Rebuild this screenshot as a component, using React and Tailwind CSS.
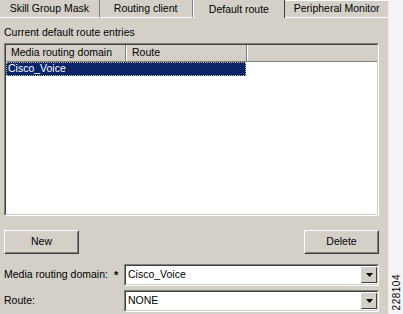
import React from "react";

const font = { fontFamily: '"Liberation Sans", Arial, sans-serif' };

function Tab({ label, width, selected, last }) {
    if (selected) {
        return (
            <div
                className={`${width} h-[18px] flex items-center justify-center border-l border-white border-r border-r-[#404040] bg-[#d4d0c8] pt-[1px]`}
            >
                {label}
            </div>
        );
    }
    return (
        <div
            className={`${width} h-[18px] flex items-center justify-center bg-[#d4d0c8] border-b border-white ${last ? "border-t border-white" : "border-r border-r-[#808080]"}`}
        >
            {label}
        </div>
    );
}

function Button({ children }) {
    return (
        <div className="w-[75px] h-[24px] border border-t-white border-l-white border-r-[#404040] border-b-[#404040]">
            <div className="w-full h-full flex items-center justify-center border border-t-[#d4d0c8] border-l-[#d4d0c8] border-r-[#808080] border-b-[#808080]">
                {children}
            </div>
        </div>
    );
}

function Combo({ value }) {
    return (
        <div className="w-[255px] h-[22px] border border-t-[#808080] border-l-[#808080] border-r-white border-b-white">
            <div className="w-full h-full flex items-center bg-white border border-t-[#404040] border-l-[#404040] border-r-[#d4d0c8] border-b-[#d4d0c8]">
                <span className="flex-1 pl-[2px]">{value}</span>
                <div className="w-[16px] h-[16px] bg-[#d4d0c8] border border-t-[#d4d0c8] border-l-[#d4d0c8] border-r-[#404040] border-b-[#404040] flex items-center justify-center">
                    <svg width="7" height="4" viewBox="0 0 7 4">
                        <path d="M0 0h7L3.5 4z" fill="#000" />
                    </svg>
                </div>
            </div>
        </div>
    );
}

export default function App() {
    return (
        <div className="w-[403px] h-[314px] flex bg-white text-[10.5px] text-black overflow-hidden" style={font}>
            <div className="w-[389px] h-full flex flex-col bg-[#d4d0c8] border-r border-r-[#eeeeee]">
                <div className="flex h-[18px] bg-white">
                    <Tab label="Skill Group Mask" width="w-[100px]" />
                    <Tab label="Routing client" width="w-[93px]" />
                    <Tab label="Default route" width="w-[93px]" selected />
                    <Tab label="Peripheral Monitor" width="w-[103px]" last />
                </div>

                <div className="flex flex-col px-[4px]">
                    <div className="mt-[8px] h-[13px] leading-[13px]">Current default route entries</div>

                    <div className="mt-[4px] w-[375px] h-[173px] border border-t-[#808080] border-l-[#808080] border-r-white border-b-white">
                        <div className="w-full h-full bg-white border border-t-[#404040] border-l-[#404040] border-r-[#d4d0c8] border-b-[#d4d0c8] flex flex-col">
                            <div className="flex h-[17px] bg-[#d4d0c8] border-b border-b-[#808080]">
                                <div className="w-[120px] pl-[5px] flex items-center border-r border-r-[#808080]">
                                    Media routing domain
                                </div>
                                <div className="w-[121px] pl-[5px] flex items-center border-l border-l-white border-r border-r-[#808080]">
                                    Route
                                </div>
                                <div className="flex-1 border-l border-l-white" />
                            </div>
                            <div className="w-[240px] h-[14px] flex items-center bg-[#0a246a] text-white pl-[1px] border border-dotted border-[#c8c890]">
                                Cisco_Voice
                            </div>
                        </div>
                    </div>

                    <div className="mt-[14px] w-[375px] flex justify-between">
                        <Button>New</Button>
                        <Button>Delete</Button>
                    </div>

                    <div className="mt-[10px] w-[375px] flex items-center">
                        <span className="w-[110px]">Media routing domain:</span>
                        <span className="w-[10px] font-bold text-[11px]">*</span>
                        <Combo value="Cisco_Voice" />
                    </div>
                    <div className="mt-[4px] w-[375px] flex items-center">
                        <span className="w-[120px]">Route:</span>
                        <Combo value="NONE" />
                    </div>
                </div>
            </div>
            <div className="flex-1 flex flex-col justify-end items-center pb-[4px] bg-[#f4f4f4]">
                <span className="[writing-mode:vertical-rl] rotate-180 text-[10px] tracking-[0.5px]">228104</span>
            </div>
        </div>
    );
}
